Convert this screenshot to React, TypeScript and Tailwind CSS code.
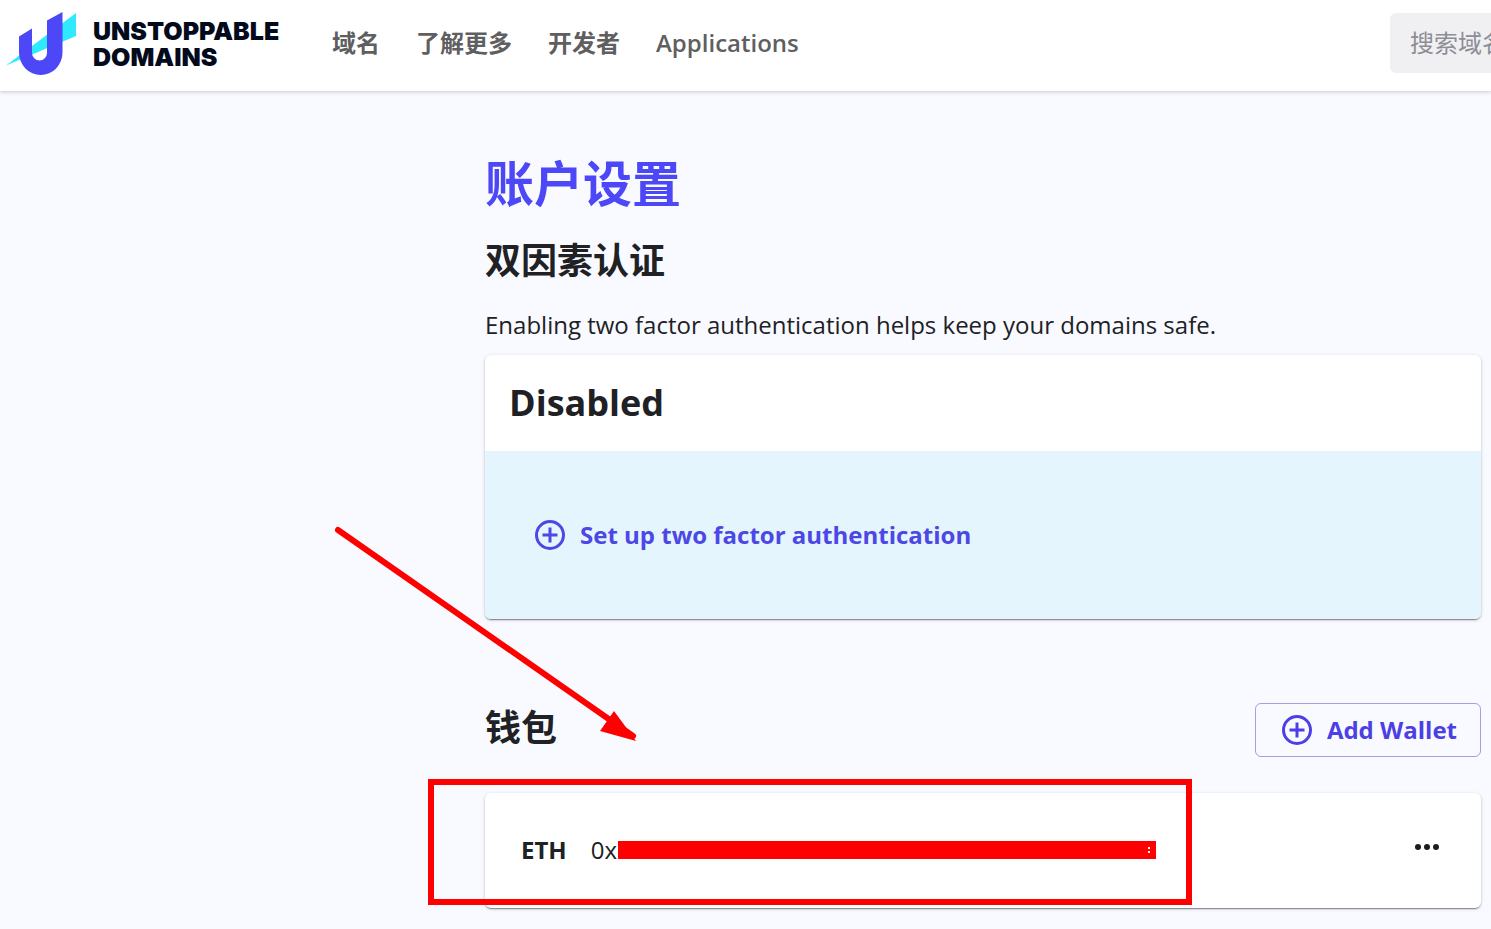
import React from 'react';

const NAV_LINKS = ['域名', '了解更多', '开发者', 'Applications'];

function Logo() {
  return (
    <a href="#home" className="flex shrink-0 items-center gap-4 pt-0.5" aria-label="Unstoppable Domains">
      <svg width="71" height="64" viewBox="0 0 71 64" aria-hidden="true">
        <path d="M70 1V24L0 53.500Z" fill="#2fe9ff" />
        <path
          d="M56.500 0v40.500a21.750 22.500 0 0 1-43.500 0V24.500l13-8v24.500a7.500 7.500 0 0 0 15 0V8.500Z"
          fill="#4c47f7"
        />
      </svg>
      <span className="w-[191px] font-['Inter'] text-[25px] leading-[26px] font-black text-[#030a1c]">
        UNSTOPPABLE DOMAINS
      </span>
    </a>
  );
}

function Header() {
  return (
    <header className="relative flex h-[91px] items-center overflow-hidden bg-white pb-1.5 pl-1.5">
      <Logo />
      <nav className="ml-12 flex gap-9 text-2xl whitespace-nowrap text-[#5f5f5f]">
        {NAV_LINKS.map((label) => (
          <a
            key={label}
            href="#nav"
            className={label === 'Applications' ? 'font-semibold' : 'font-bold'}
          >
            {label}
          </a>
        ))}
      </nav>
      <input
        type="text"
        aria-label="搜索域名"
        placeholder="搜索域名"
        className="ml-auto h-[60px] w-[101px] shrink-0 rounded-l-md bg-[#f0f0f2] pl-5 text-2xl text-[#8d8d96] outline-none placeholder:text-[#8d8d96]"
      />
    </header>
  );
}

function PlusCircle() {
  return (
    <svg
      width="30"
      height="30"
      viewBox="0 0 30 30"
      fill="none"
      stroke="currentColor"
      strokeWidth="3"
      className="shrink-0"
      aria-hidden="true"
    >
      <circle cx="15" cy="15" r="13.500" />
      <path d="M15 7.500v15M7.500 15h15" />
    </svg>
  );
}

function Arrow() {
  return (
    <svg
      className="pointer-events-none absolute top-0 left-0"
      width="310"
      height="220"
      viewBox="0 0 310 220"
      aria-hidden="true"
    >
      <path d="M6 6L301 212" stroke="#ff0000" strokeWidth="6" strokeLinecap="round" />
      <path d="M282 187L304 217L268 207Z" fill="#ff0000" />
    </svg>
  );
}

const cardClass =
  'rounded-md bg-white shadow-[0_2px_1px_-1px_rgba(0,0,0,0.3),0_1px_2px_0_rgba(0,0,0,0.22),0_1px_4px_0_rgba(0,0,0,0.1)]';

export default function App() {
  return (
    <div className="min-h-screen overflow-hidden bg-[#f9faff] font-['Open_Sans','Noto_Sans_CJK_SC',sans-serif] text-[#202124]">
      <div className="relative shadow-[0_1px_4px_rgba(0,0,0,0.2)]">
        <Header />
      </div>
      <main className="pt-14 pr-2.5 pb-5 pl-[485px]">
        <h1 className="text-[49px] leading-[72px] font-bold text-[#4c47f7]">账户设置</h1>

        <section>
          <h2 className="mt-[18px] text-4xl leading-[48px] font-bold">双因素认证</h2>
          <p className="mt-[22px] text-2xl leading-[36px]">
            Enabling two factor authentication helps keep your domains safe.
          </p>
          <div className={`mt-3 ${cardClass}`}>
            <h3 className="px-6 py-6 text-4xl leading-[48px] font-bold">Disabled</h3>
            <div className="flex h-[168px] items-center rounded-b-md bg-[#e4f5fe] px-[50px]">
              <button
                type="button"
                className="flex items-center gap-[15px] text-2xl font-bold text-[#4c47e5]"
              >
                <PlusCircle />
                Set up two factor authentication
              </button>
            </div>
          </div>
        </section>

        <section className="mt-[84px]">
          <div className="relative flex items-center justify-between">
            <h2 className="pb-1 text-4xl leading-[48px] font-bold">钱包</h2>
            <button
              type="button"
              className="flex h-[54px] items-center gap-[15px] rounded-md border border-[#a59fe0] pr-[23px] pl-[26px] text-2xl font-bold text-[#4c3fe5]"
            >
              <PlusCircle />
              Add Wallet
            </button>
            <div className="absolute -top-[179px] -left-[153px]">
              <Arrow />
            </div>
          </div>

          <div className={`relative mt-9 flex h-[115px] items-center pr-10 pb-0.5 pl-9 ${cardClass}`}>
            <span className="text-2xl font-bold">ETH</span>
            <span className="ml-6 text-2xl">0x</span>
            <span className="ml-px flex h-[18px] w-[538px] items-center justify-end bg-[#ff0000] pr-1.5">
              <span className="flex flex-col gap-0.5">
                <span className="size-0.5 bg-white" />
                <span className="size-0.5 bg-white" />
              </span>
            </span>
            <button type="button" aria-label="More options" className="mb-1.5 ml-auto">
              <svg width="28" height="12" viewBox="0 0 28 12" fill="#1c1c1e" aria-hidden="true">
                <circle cx="5" cy="6" r="3" />
                <circle cx="14" cy="6" r="3" />
                <circle cx="23" cy="6" r="3" />
              </svg>
            </button>
            <div className="pointer-events-none absolute -top-3.5 -left-[57px] h-[126px] w-[764px] border-6 border-[#ff0000]" />
          </div>
        </section>
      </main>
    </div>
  );
}
